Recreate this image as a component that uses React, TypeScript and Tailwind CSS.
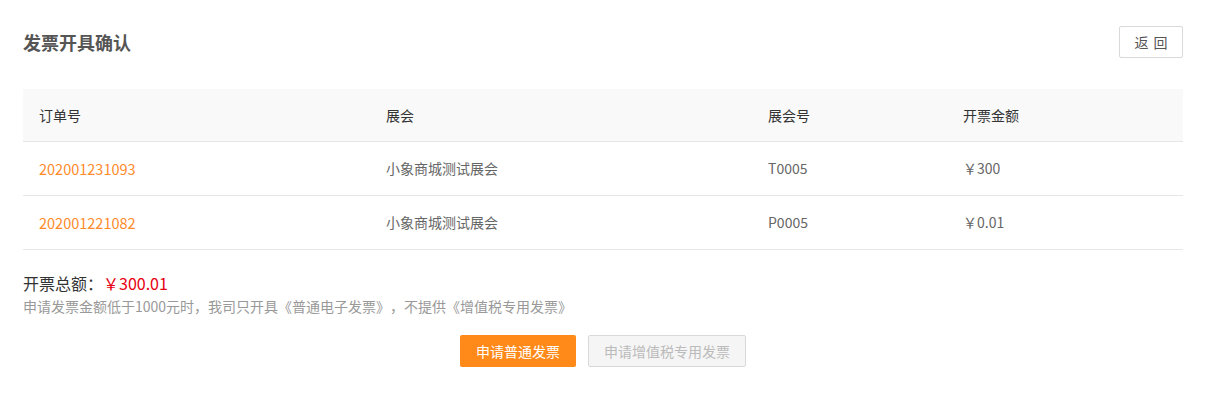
import React from "react";

const rows = [
  { id: "202001231093", expo: "小象商城测试展会", no: "T0005", amount: "￥300" },
  { id: "202001221082", expo: "小象商城测试展会", no: "P0005", amount: "￥0.01" },
];

export default function App() {
  return (
    <div
      className="h-[403px] w-[1212px] bg-white px-[23px] text-[#666] [text-spacing-trim:space-all]"
      style={{ fontFamily: '"Microsoft YaHei", "Noto Sans CJK SC", sans-serif' }}
    >
      <div className="w-[1160px]">
        <div className="flex items-start justify-between pt-[26px]">
          <h1 className="mt-[4px] text-[18px] font-bold leading-[24px] text-[#555]">发票开具确认</h1>
          <button className="flex h-[32px] w-[64px] items-center justify-center gap-[5px] rounded-[2px] border border-[#d9d9d9] bg-white text-[14px] text-[#555]">
            <span>返</span>
            <span>回</span>
          </button>
        </div>

        <div className="mt-[31px] w-[1160px] text-[14px]">
          <div className="flex h-[53px] items-center border-b border-[#e6e6e6] bg-[#f9f9f9] text-[#333]">
            <div className="w-[347px] pl-[16px]">订单号</div>
            <div className="w-[382px] pl-[16px]">展会</div>
            <div className="w-[195px] pl-[16px]">展会号</div>
            <div className="flex-1 pl-[16px]">开票金额</div>
          </div>
          {rows.map((r) => (
            <div key={r.id} className="flex h-[54px] items-center border-b border-[#e6e6e6]">
              <div className="w-[347px] pl-[16px] text-[14.5px] text-[#ff8a2a]">{r.id}</div>
              <div className="w-[382px] pl-[16px]">{r.expo}</div>
              <div className="w-[195px] pl-[16px]">{r.no}</div>
              <div className="flex-1 pl-[16px]">{r.amount}</div>
            </div>
          ))}
        </div>

        <div className="mt-[22px] text-[16px] leading-[22px] text-[#333]">
          开票总额：<span className="text-[#e60012]">￥300.01</span>
        </div>
        <div className="mt-[2px] text-[14px] leading-[20px] text-[#999]">
          申请发票金额低于1000元时，我司只开具《普通电子发票》，不提供《增值税专用发票》
        </div>

        <div className="mt-[19px] flex justify-center gap-[12px]">
          <button className="h-[32px] w-[116px] rounded-[2px] bg-[#ff8a1a] text-[14px] text-white">
            申请普通发票
          </button>
          <button className="h-[32px] w-[158px] rounded-[2px] border border-[#d9d9d9] bg-[#f5f5f5] text-[14px] text-[#bbb]">
            申请增值税专用发票
          </button>
        </div>
      </div>
    </div>
  );
}
